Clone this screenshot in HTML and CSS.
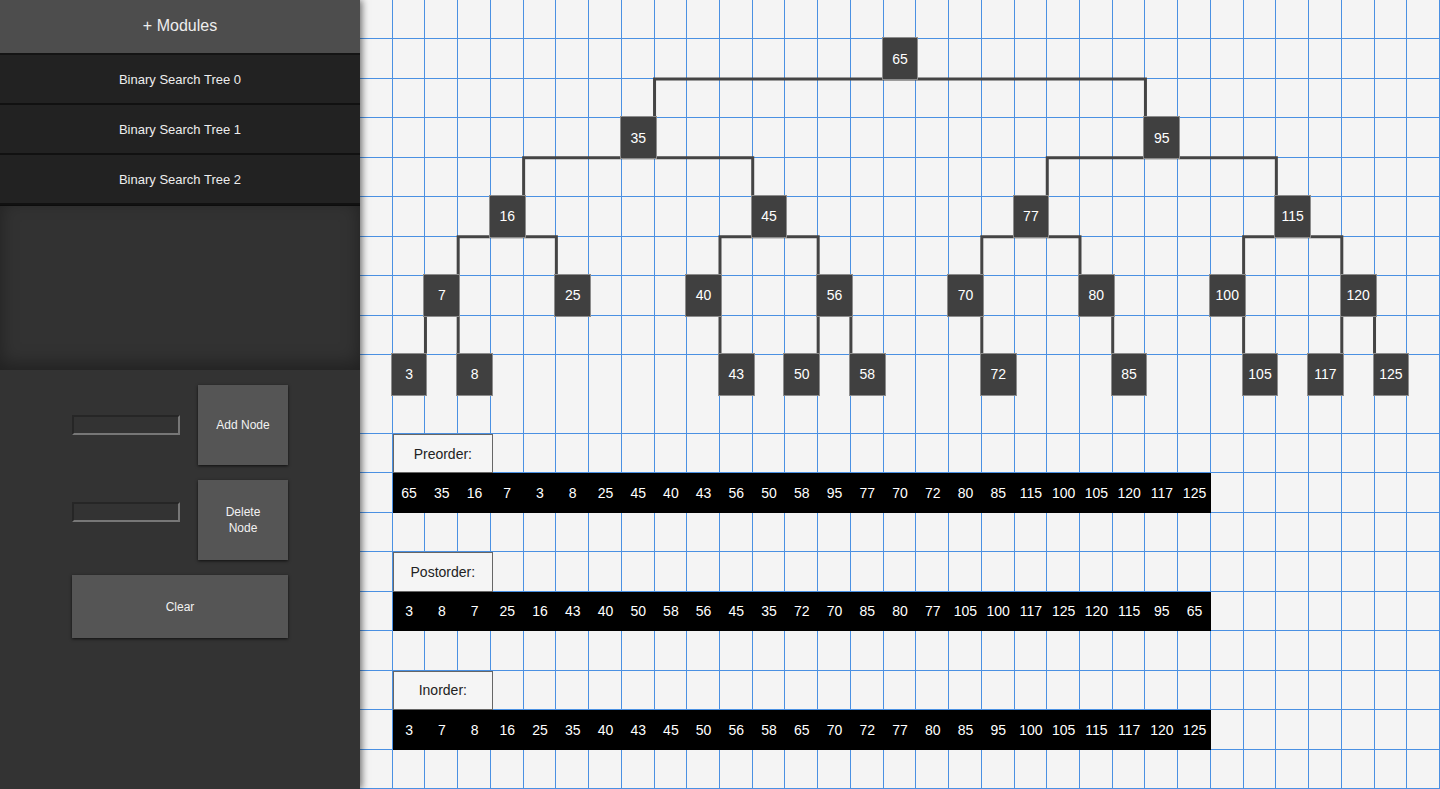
FILE: index.html
```html
<!DOCTYPE html>
<html lang="en">
<head>
<meta charset="utf-8">
<title>Binary Search Tree</title>
<link rel="stylesheet" href="styles.css">
</head>
<body>
<div class="app">
  <aside class="sidebar">
    <div class="modules-header">+ Modules</div>
    <ul class="module-list">
      <li class="module-item">Binary Search Tree 0</li>
      <li class="module-item">Binary Search Tree 1</li>
      <li class="module-item">Binary Search Tree 2</li>
    </ul>
    <div class="inset-panel"></div>
    <div class="controls">
      <div class="control-row">
        <input class="text-input" type="text">
        <button class="btn btn-square">Add Node</button>
      </div>
      <div class="control-row">
        <input class="text-input" type="text">
        <button class="btn btn-square">Delete Node</button>
      </div>
      <button class="btn btn-wide">Clear</button>
    </div>
  </aside>

  <main class="canvas">
    <svg class="edges" viewBox="0 0 33 20" preserveAspectRatio="none">
      <g fill="none" stroke="#444" stroke-width="3" stroke-linecap="square" stroke-linejoin="miter">
        <path vector-effect="non-scaling-stroke" d="M9 3V2H24V3"/>
        <path vector-effect="non-scaling-stroke" d="M5 5V4H12V5"/>
        <path vector-effect="non-scaling-stroke" d="M21 5V4H28V5"/>
        <path vector-effect="non-scaling-stroke" d="M3 7V6H6V7"/>
        <path vector-effect="non-scaling-stroke" d="M11 7V6H14V7"/>
        <path vector-effect="non-scaling-stroke" d="M19 7V6H22V7"/>
        <path vector-effect="non-scaling-stroke" d="M27 7V6H30V7"/>
        <path vector-effect="non-scaling-stroke" d="M2 9V8H3V9"/>
        <path vector-effect="non-scaling-stroke" d="M11 8V9"/>
        <path vector-effect="non-scaling-stroke" d="M14 9V8H15V9"/>
        <path vector-effect="non-scaling-stroke" d="M19 8V9"/>
        <path vector-effect="non-scaling-stroke" d="M23 8V9"/>
        <path vector-effect="non-scaling-stroke" d="M27 8V9"/>
        <path vector-effect="non-scaling-stroke" d="M30 9V8H31V9"/>
      </g>
    </svg>

    <div class="node" style="grid-area: 2 / 17">65</div>
    <div class="node" style="grid-area: 4 / 9">35</div>
    <div class="node" style="grid-area: 4 / 25">95</div>
    <div class="node" style="grid-area: 6 / 5">16</div>
    <div class="node" style="grid-area: 6 / 13">45</div>
    <div class="node" style="grid-area: 6 / 21">77</div>
    <div class="node" style="grid-area: 6 / 29">115</div>
    <div class="node" style="grid-area: 8 / 3">7</div>
    <div class="node" style="grid-area: 8 / 7">25</div>
    <div class="node" style="grid-area: 8 / 11">40</div>
    <div class="node" style="grid-area: 8 / 15">56</div>
    <div class="node" style="grid-area: 8 / 19">70</div>
    <div class="node" style="grid-area: 8 / 23">80</div>
    <div class="node" style="grid-area: 8 / 27">100</div>
    <div class="node" style="grid-area: 8 / 31">120</div>
    <div class="node" style="grid-area: 10 / 2">3</div>
    <div class="node" style="grid-area: 10 / 4">8</div>
    <div class="node" style="grid-area: 10 / 12">43</div>
    <div class="node" style="grid-area: 10 / 14">50</div>
    <div class="node" style="grid-area: 10 / 16">58</div>
    <div class="node" style="grid-area: 10 / 20">72</div>
    <div class="node" style="grid-area: 10 / 24">85</div>
    <div class="node" style="grid-area: 10 / 28">105</div>
    <div class="node" style="grid-area: 10 / 30">117</div>
    <div class="node" style="grid-area: 10 / 32">125</div>

    <div class="trav-label row-pre-label">Preorder:</div>
    <div class="trav-bar row-pre-bar">
      <span>65</span><span>35</span><span>16</span><span>7</span><span>3</span><span>8</span><span>25</span><span>45</span><span>40</span><span>43</span><span>56</span><span>50</span><span>58</span><span>95</span><span>77</span><span>70</span><span>72</span><span>80</span><span>85</span><span>115</span><span>100</span><span>105</span><span>120</span><span>117</span><span>125</span>
    </div>

    <div class="trav-label row-post-label">Postorder:</div>
    <div class="trav-bar row-post-bar">
      <span>3</span><span>8</span><span>7</span><span>25</span><span>16</span><span>43</span><span>40</span><span>50</span><span>58</span><span>56</span><span>45</span><span>35</span><span>72</span><span>70</span><span>85</span><span>80</span><span>77</span><span>105</span><span>100</span><span>117</span><span>125</span><span>120</span><span>115</span><span>95</span><span>65</span>
    </div>

    <div class="trav-label row-in-label">Inorder:</div>
    <div class="trav-bar row-in-bar">
      <span>3</span><span>7</span><span>8</span><span>16</span><span>25</span><span>35</span><span>40</span><span>43</span><span>45</span><span>50</span><span>56</span><span>58</span><span>65</span><span>70</span><span>72</span><span>77</span><span>80</span><span>85</span><span>95</span><span>100</span><span>105</span><span>115</span><span>117</span><span>120</span><span>125</span>
    </div>
  </main>
</div>
</body>
</html>
```

FILE: styles.css
```css
* {
  box-sizing: border-box;
}

html, body {
  margin: 0;
  padding: 0;
  height: 100%;
  overflow: hidden;
}

body {
  font-family: "Liberation Sans", Arial, Helvetica, sans-serif;
  background: #f4f4f4;
}

.app {
  display: flex;
  height: 100vh;
}

/* ---------- Sidebar ---------- */
.sidebar {
  width: 360px;
  flex: 0 0 360px;
  background: #333333;
  position: relative;
  z-index: 2;
  box-shadow: 2px 0 7px rgba(0, 0, 0, 0.55);
  display: flex;
  flex-direction: column;
}

.modules-header {
  height: 55px;
  background: #4d4d4d;
  border-bottom: 2px solid #141414;
  color: #eeeeee;
  font-size: 16px;
  display: flex;
  align-items: center;
  justify-content: center;
  padding-bottom: 1px;
}

.module-list {
  list-style: none;
  margin: 0;
  padding: 0;
}

.module-item {
  height: 50px;
  background: #222222;
  border-bottom: 2px solid #111111;
  color: #eeeeee;
  font-size: 13px;
  display: flex;
  align-items: center;
  justify-content: center;
}

.inset-panel {
  height: 165px;
  background: #323232;
  box-shadow: inset 0 -6px 18px rgba(0, 0, 0, 0.35);
  border-top: 1px solid #0d0d0d;
}

.controls {
  padding: 15px 0 0 72px;
  display: flex;
  flex-direction: column;
  gap: 15px;
}

.control-row {
  display: flex;
  align-items: baseline;
  gap: 18px;
}

.text-input {
  width: 108px;
  height: 20px;
  margin: 0;
  padding: 0 3px;
  background: #333333;
  border-style: solid;
  border-width: 2px;
  border-color: #262626 #777777 #777777 #262626;
  color: #eeeeee;
  font-family: inherit;
  font-size: 12px;
  outline: none;
}

.btn {
  background: #555555;
  color: #f2f2f2;
  border: none;
  margin: 0;
  font-family: inherit;
  font-size: 12px;
  line-height: 16px;
  box-shadow: 0 1px 3px rgba(0, 0, 0, 0.7);
  cursor: pointer;
}

.btn-square {
  width: 90px;
  height: 80px;
  padding: 0 15px;
}

.btn-wide {
  width: 216px;
  height: 63px;
  padding: 0;
}

/* ---------- Canvas ---------- */
.canvas {
  flex: 1;
  height: 100vh;
  display: grid;
  grid-template-columns: repeat(33, 1fr);
  grid-template-rows: repeat(20, 1fr);
  background-color: #f4f4f4;
  background-image:
    repeating-linear-gradient(to right,
      transparent 0,
      transparent calc(100% / 33 - 1px),
      #4a90e2 calc(100% / 33 - 1px),
      #4a90e2 calc(100% / 33)),
    repeating-linear-gradient(to bottom,
      transparent 0,
      transparent calc(100% / 20 - 1px),
      #4a90e2 calc(100% / 20 - 1px),
      #4a90e2 calc(100% / 20));
}

.edges {
  grid-area: 1 / 1 / 21 / 34;
  width: 100%;
  height: 100%;
  display: block;
}

.node {
  margin: -2px -2px -1px -2px;
  background: #404040;
  border: 1px solid #8c8c8c;
  color: #ffffff;
  font-size: 14px;
  display: flex;
  align-items: center;
  justify-content: center;
}

.trav-label {
  grid-column: 2 / span 3;
  margin-right: -2px;
  background: #f5f5f5;
  border: 1px solid #666666;
  color: #222222;
  font-size: 14px;
  display: flex;
  align-items: center;
  justify-content: center;
}

.trav-bar {
  grid-column: 2 / span 25;
  background: #000000;
  color: #ffffff;
  font-size: 14px;
  display: grid;
  grid-template-columns: repeat(25, 1fr);
  align-items: center;
  text-align: center;
}

.row-pre-label { grid-row: 12; }
.row-pre-bar { grid-row: 13; }
.row-post-label { grid-row: 15; }
.row-post-bar { grid-row: 16; }
.row-in-label { grid-row: 18; }
.row-in-bar { grid-row: 19; }
```
